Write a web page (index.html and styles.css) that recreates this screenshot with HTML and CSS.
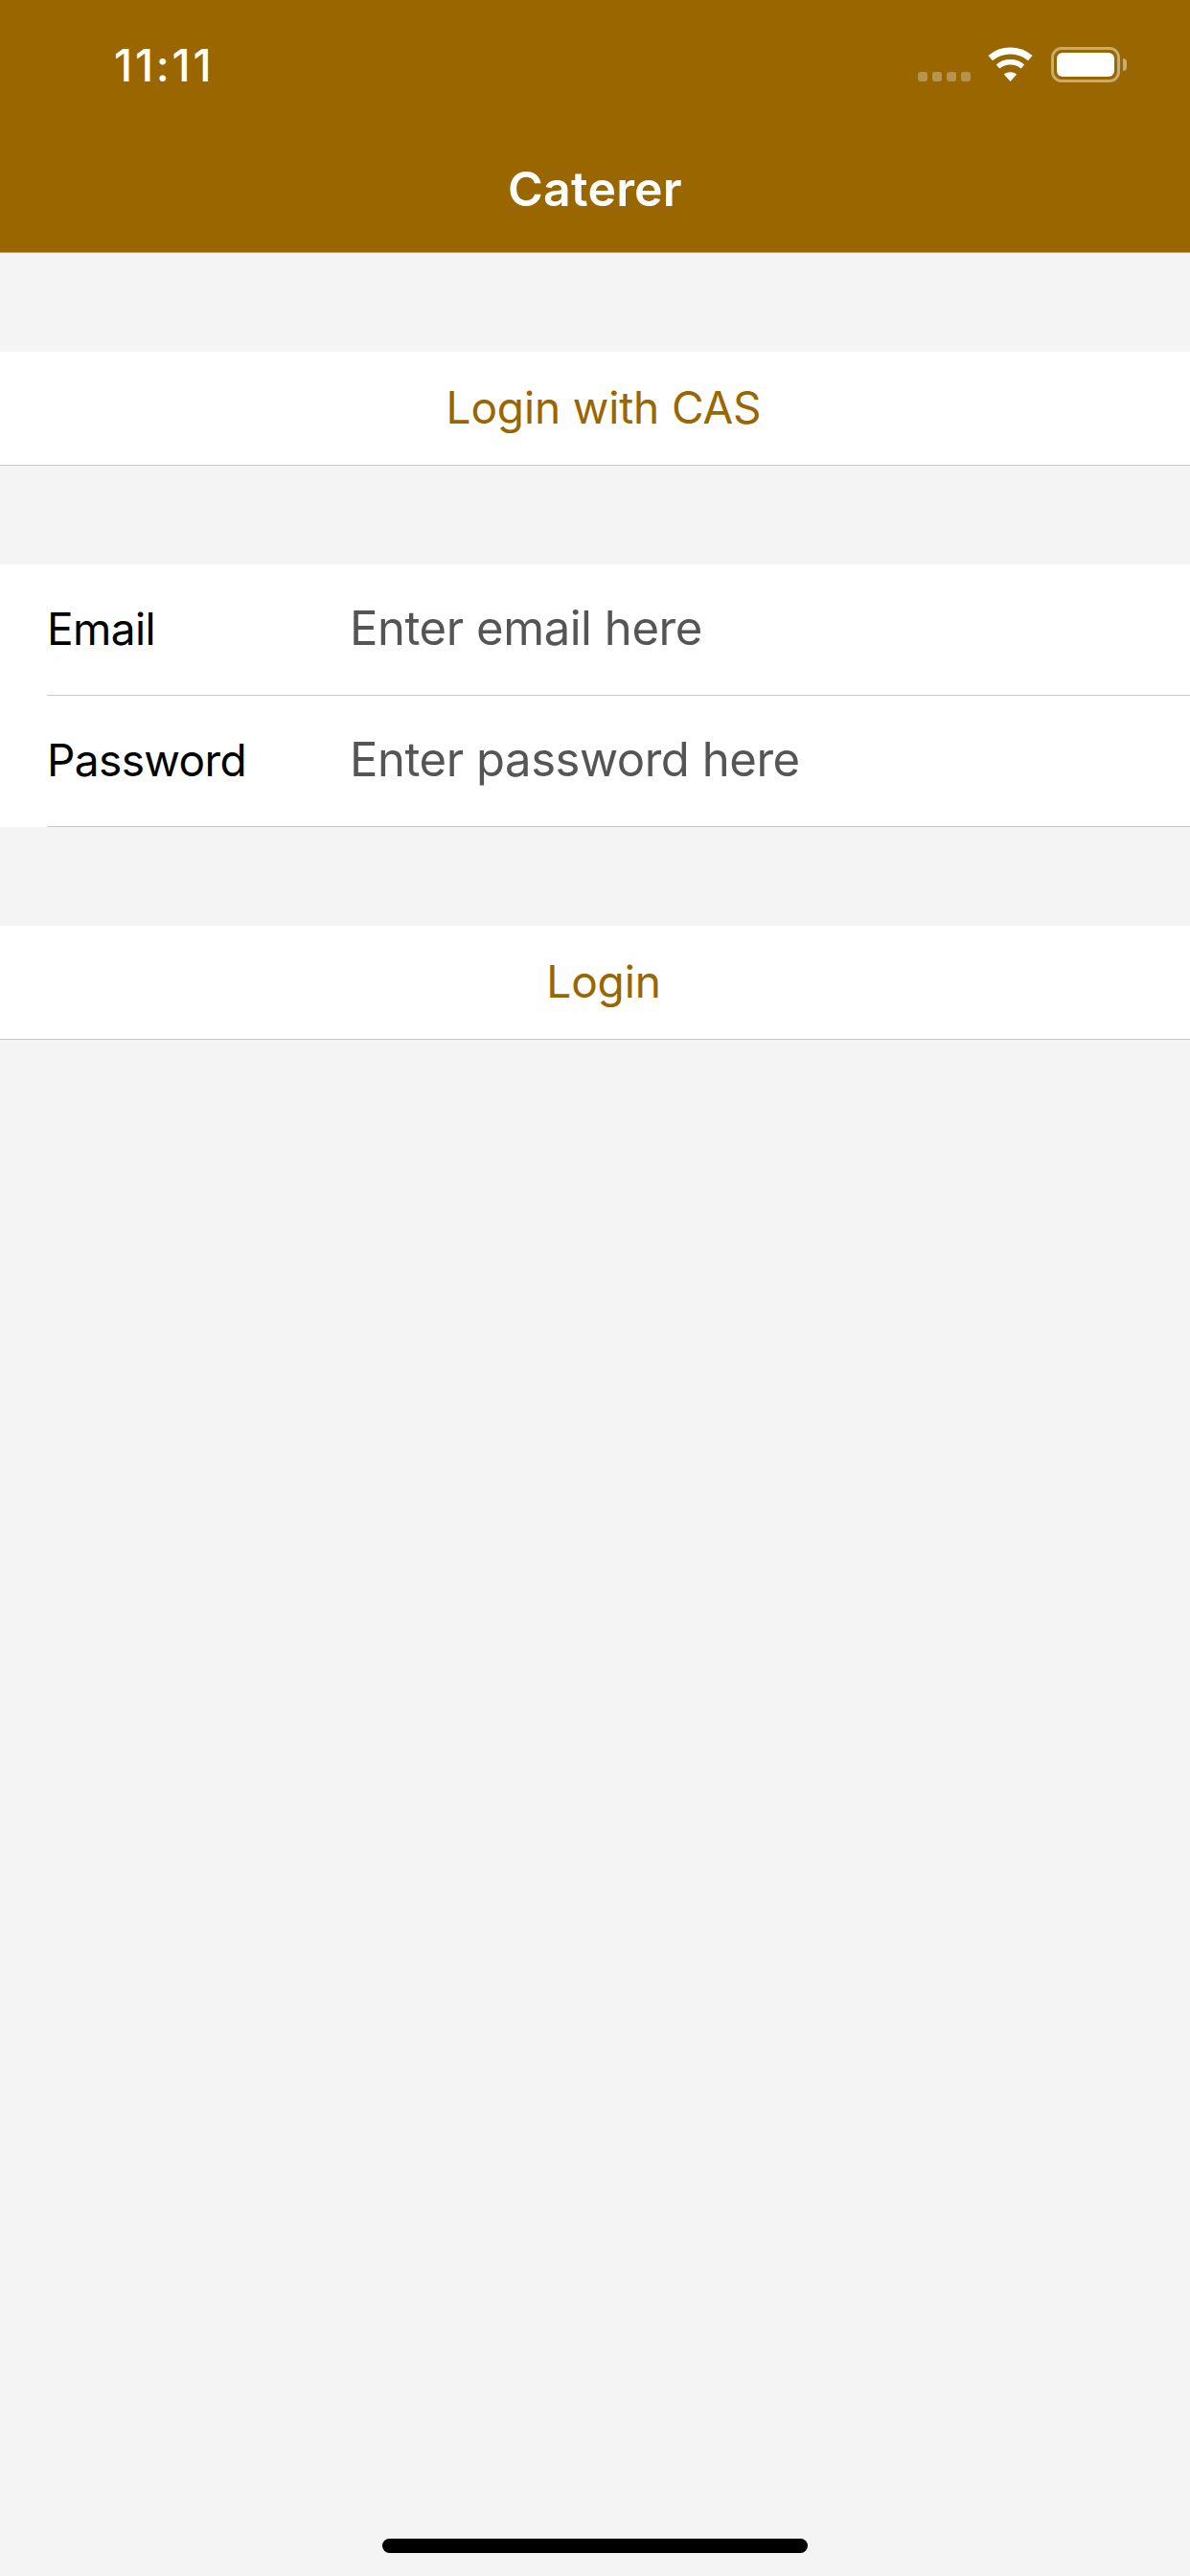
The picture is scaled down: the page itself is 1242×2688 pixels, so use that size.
FILE: index.html
```html
<!DOCTYPE html>
<html lang="en">
<head>
<meta charset="utf-8">
<title>Caterer</title>
<link rel="stylesheet" href="styles.css">
</head>
<body>
<div class="screen">
  <header class="nav">
    <div class="status">
      <span class="time">11:11</span>
      <div class="status-icons">
        <div class="signal"><i></i><i></i><i></i><i></i></div>
        <svg class="wifi" viewBox="0 0 47 36" width="47" height="36">
          <path d="M2.7 11.6A32.5 32.5 0 0 1 44.3 11.6" fill="none" stroke="#fff" stroke-width="7"/>
          <path d="M10.5 20.5A20.2 20.2 0 0 1 36.5 20.5" fill="none" stroke="#fff" stroke-width="5.5"/>
          <path d="M23.5 36L16.8 28.6A10.5 10.5 0 0 1 30.2 28.6Z" fill="#fff"/>
        </svg>
        <div class="battery"><div class="battery-fill"></div></div>
        <div class="battery-cap"></div>
      </div>
    </div>
    <div class="nav-title">Caterer</div>
  </header>
  <main class="content">
    <section class="group">
      <div class="button-row">Login with CAS</div>
    </section>
    <section class="group group-form">
      <div class="field">
        <div class="field-inner">
          <span class="field-label">Email</span>
          <span class="field-placeholder">Enter email here</span>
        </div>
      </div>
      <div class="field">
        <div class="field-inner">
          <span class="field-label">Password</span>
          <span class="field-placeholder">Enter password here</span>
        </div>
      </div>
    </section>
    <section class="group">
      <div class="button-row">Login</div>
    </section>
  </main>
  <div class="home-bar"><div class="home-indicator"></div></div>
</div>
</body>
</html>
```
FILE: styles.css
```css
* { box-sizing: border-box; }
html, body { margin: 0; padding: 0; }
body { font-family: Inter, "Liberation Sans", sans-serif; background: #f4f4f4; }
.screen { width: 1242px; height: 2688px; display: flex; flex-direction: column; background: #f4f4f4; overflow: hidden; }

.nav { height: 264px; background: #996600; border-bottom: 1px solid #a8a8a8; color: #fff; display: flex; flex-direction: column; }
.status { height: 132px; display: flex; align-items: flex-start; justify-content: space-between; padding: 0 66px 0 119px; }
.time { font-size: 46px; line-height: 54px; margin-top: 41px; font-weight: 500; letter-spacing: 2.8px; }
.status-icons { display: flex; align-items: flex-start; margin-top: 49px; }
.signal { display: flex; gap: 5px; margin-top: 26px; margin-right: 18px; }
.signal i { display: block; width: 10px; height: 10px; border-radius: 3px; background: rgba(255,255,255,.3); }
.wifi { display: block; margin-right: 19px; }
.battery { width: 72px; height: 37px; border: 3px solid rgba(255,255,255,.45); border-radius: 11px; padding: 3px; }
.battery-fill { width: 100%; height: 100%; background: #fff; border-radius: 6px; }
.battery-cap { width: 4px; height: 13px; margin: 12px 0 0 3px; background: rgba(255,255,255,.45); border-radius: 0 4px 4px 0; }
.nav-title { text-align: center; font-size: 50px; line-height: 60px; font-weight: 600; letter-spacing: 0.2px; margin-top: 35px; }

.content { display: flex; flex-direction: column; gap: 103px; padding-top: 103px; }
.group { background: #fff; }
.button-row { height: 119px; display: flex; align-items: center; justify-content: center; padding-left: 18px; padding-bottom: 2px; background: #fff; border-bottom: 1px solid #c8c8c8; color: #996600; font-size: 46px; letter-spacing: -0.15px; }
.field { height: 137px; padding-left: 49px; }
.field-inner { height: 100%; display: flex; align-items: center; border-bottom: 1px solid #c8c8c8; padding-bottom: 3px; }
.field-label { width: 316px; flex: none; color: #000; font-size: 46px; letter-spacing: -0.6px; }
.field-placeholder { color: #555; font-size: 49px; letter-spacing: -0.45px; }

.home-bar { margin-top: auto; padding: 0 399px 24px; }
.home-indicator { height: 15px; border-radius: 8px; background: #000; }
```
